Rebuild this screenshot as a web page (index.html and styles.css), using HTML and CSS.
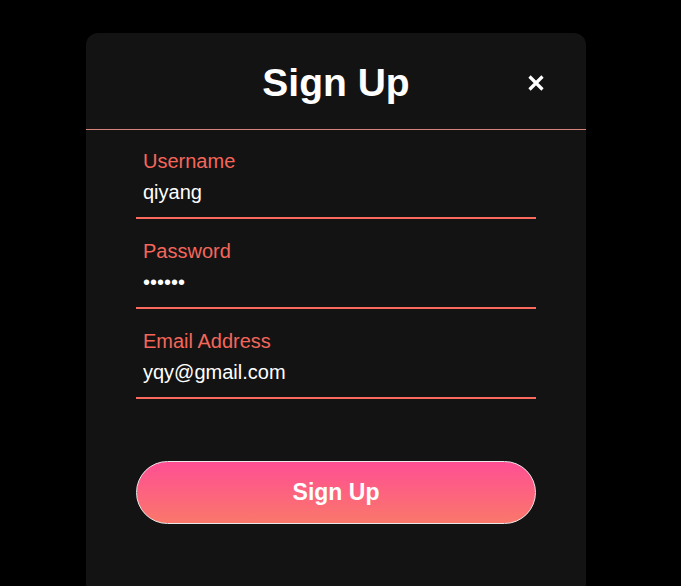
FILE: index.html
```html
<!DOCTYPE html>
<html lang="en">
<head>
<meta charset="utf-8">
<title>Sign Up</title>
<link rel="stylesheet" href="styles.css">
</head>
<body>
<div class="card">
  <header class="card-header">
    <span class="spacer"></span>
    <h1 class="title">Sign Up</h1>
    <button class="close" aria-label="Close">
      <svg width="16" height="16" viewBox="0 0 16 16"><path d="M1.5 1.5L14.5 14.5M14.5 1.5L1.5 14.5" stroke="#fff" stroke-width="3.2" fill="none"/></svg>
    </button>
  </header>
  <form class="form">
    <label class="field">
      <span class="label">Username</span>
      <input class="input" type="text" value="qiyang">
    </label>
    <label class="field">
      <span class="label">Password</span>
      <input class="input" type="password" value="123456">
    </label>
    <label class="field">
      <span class="label">Email Address</span>
      <input class="input" type="email" value="yqy@gmail.com">
    </label>
    <button class="submit" type="button">Sign Up</button>
  </form>
</div>
</body>
</html>
```
FILE: styles.css
```css
* { box-sizing: border-box; }
html, body { margin: 0; padding: 0; background: #000; }
body {
  font-family: "Liberation Sans", Arial, sans-serif;
  padding: 33px 0 0 86px;
  height: 586px;
  overflow: hidden;
}
.card {
  width: 500px;
  height: 553px;
  background: #131313;
  border-radius: 12px 12px 0 0;
}
.card-header {
  height: 97px;
  display: grid;
  grid-template-columns: 1fr auto 1fr;
  align-items: center;
  padding-top: 3px;
  border-bottom: 1px solid #d8827c;
}
.title {
  margin: 0;
  font-size: 39px;
  line-height: 45px;
  font-weight: 700;
  color: #fff;
}
.close {
  justify-self: end;
  margin-right: 42px;
  width: 16px;
  height: 16px;
  padding: 0;
  border: 0;
  background: none;
  display: flex;
}
.form {
  padding: 20px 50px 0;
  display: flex;
  flex-direction: column;
}
.field {
  display: flex;
  flex-direction: column;
  margin-bottom: 21px;
}
.label {
  padding-left: 7px;
  font-size: 20px;
  line-height: 23px;
  color: #f5665a;
}
.input {
  height: 46px;
  padding: 8px 7px 13px;
  border: 0;
  border-bottom: 2px solid #fb6b5d;
  background: transparent;
  color: #fff;
  font-family: "Liberation Sans", Arial, sans-serif;
  font-size: 20px;
  line-height: 23px;
  outline: none;
}
.submit {
  margin-top: 41px;
  height: 63px;
  border: 1px solid #e8e8e8;
  border-radius: 32px;
  background: linear-gradient(to bottom, #ff4f94, #fa776a);
  color: #fff;
  font-family: "Liberation Sans", Arial, sans-serif;
  font-size: 23px;
  font-weight: 700;
}
```
